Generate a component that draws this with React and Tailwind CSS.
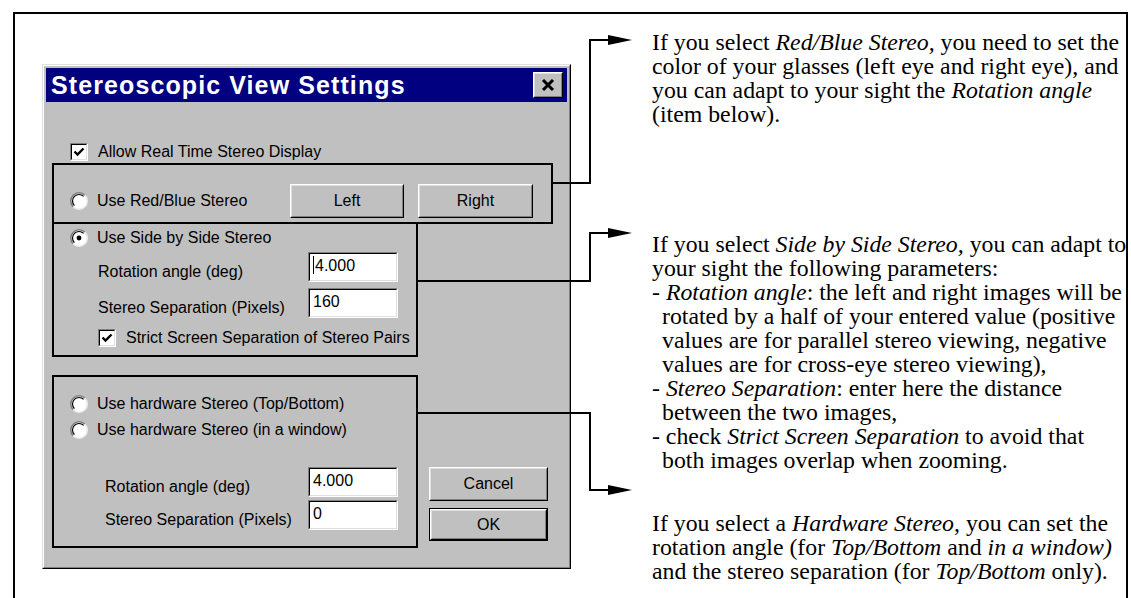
import React from 'react';

const sans = "font-['Liberation_Sans',Arial,sans-serif]";

const Raised = ({ className = '', children }) => (
    <div className={`border border-t-white border-l-white border-r-black border-b-black ${className}`}>
        <div className="w-full h-full border border-t-[#dfdfdf] border-l-[#dfdfdf] border-r-[#808080] border-b-[#808080] bg-[#c0c0c0] flex items-center justify-center">
            {children}
        </div>
    </div>
);

const Field = ({ value, caret }) => (
    <div className="w-[90px] h-[30px] border border-t-[#808080] border-l-[#808080] border-r-white border-b-white">
        <div className="w-full h-full border border-t-black border-l-black border-r-[#dfdfdf] border-b-[#dfdfdf] bg-white flex items-start pl-[3px] pt-[2px] text-[16px] leading-[20px]">
            {caret && <span className="w-px h-[18px] bg-black mr-px"></span>}
            <span>{value}</span>
        </div>
    </div>
);

const Radio = ({ checked }) => (
    <svg width="18" height="18" viewBox="0 0 18 18" className="shrink-0">
        <circle cx="9" cy="9" r="8.2" fill="#fff" />
        <path d="M14.8 3.2 A8.2 8.2 0 0 0 3.2 14.8" stroke="#808080" strokeWidth="1.6" fill="none" />
        <path d="M13.6 4.4 A6.5 6.5 0 0 0 4.4 13.6" stroke="#000" strokeWidth="1.2" fill="none" />
        <path d="M3.2 14.8 A8.2 8.2 0 0 0 14.8 3.2" stroke="#ececec" strokeWidth="1.6" fill="none" />
        {checked && <circle cx="9" cy="9" r="2.4" fill="#000" />}
    </svg>
);

const Check = () => (
    <div className="w-[18px] h-[18px] shrink-0 border border-t-[#808080] border-l-[#808080] border-r-white border-b-white">
        <div className="w-full h-full border border-t-black border-l-black border-r-[#dfdfdf] border-b-[#dfdfdf] bg-white">
            <svg width="14" height="14" viewBox="0 0 14 14">
                <path d="M2.5 6.5 L5.5 9.5 L11.5 3.5" stroke="#000" strokeWidth="2.4" fill="none" />
            </svg>
        </div>
    </div>
);

const FieldRow = ({ label, value, caret, labelW, pl, className = '' }) => (
    <div className={`flex items-center h-[30px] ${pl} ${className}`}>
        <span className={`${labelW} mt-[10px] whitespace-nowrap`}>{label}</span>
        <Field value={value} caret={caret} />
    </div>
);

const Dialog = () => (
    <div className={`w-[529px] h-[505px] shrink-0 border border-t-[#dfdfdf] border-l-[#dfdfdf] border-r-black border-b-black ${sans} text-[16px] text-black`}>
        <div className="h-full border border-t-white border-l-white border-r-[#808080] border-b-[#808080] bg-[#c0c0c0] p-[2px] flex flex-col">
            <div className="h-[34px] bg-[#000080] flex items-center justify-between pl-[5px] pr-[4px]">
                <span className="text-white font-bold text-[25px] leading-none tracking-[1.1px]">Stereoscopic View Settings</span>
                <Raised className="w-[30px] h-[26px]">
                    <svg width="14" height="12" viewBox="0 0 14 12">
                        <path d="M2 1 L12 11 M12 1 L2 11" stroke="#000" strokeWidth="3" />
                    </svg>
                </Raised>
            </div>

            <div className="px-[6px] flex flex-col">
                <div className="mt-[41px] h-[18px] flex items-center pl-[18px]">
                    <Check />
                    <span className="ml-[10px] whitespace-nowrap">Allow Real Time Stereo Display</span>
                </div>

                <div className="mt-[2px] w-[501px] h-[61px] border-2 border-black flex items-center pl-[16px] pt-[19px] pb-[4px]">
                    <Radio />
                    <span className="ml-[9px] whitespace-nowrap">Use Red/Blue Stereo</span>
                    <div className="ml-auto mr-[18px] flex gap-[14px]">
                        <Raised className="w-[114px] h-[34px]">Left</Raised>
                        <Raised className="w-[115px] h-[34px]">Right</Raised>
                    </div>
                </div>

                <div className="w-[366px] h-[133px] border-2 border-t-0 border-black flex flex-col pl-[16px]">
                    <div className="mt-[5px] h-[18px] flex items-center">
                        <Radio checked />
                        <span className="ml-[9px] whitespace-nowrap">Use Side by Side Stereo</span>
                    </div>
                    <FieldRow className="mt-[5px]" pl="pl-[28px]" labelW="w-[210px]" label="Rotation angle (deg)" value="4.000" caret />
                    <FieldRow className="mt-[6px]" pl="pl-[28px]" labelW="w-[210px]" label="Stereo Separation (Pixels)" value="160" />
                    <div className="mt-[11px] h-[18px] flex items-center pl-[28px]">
                        <Check />
                        <span className="ml-[10px] whitespace-nowrap">Strict Screen Separation of Stereo Pairs</span>
                    </div>
                </div>

                <div className="mt-[18px] flex">
                    <div className="w-[366px] h-[173px] border-2 border-black flex flex-col pl-[16px]">
                        <div className="mt-[18px] h-[18px] flex items-center">
                            <Radio />
                            <span className="ml-[9px] whitespace-nowrap">Use hardware Stereo (Top/Bottom)</span>
                        </div>
                        <div className="mt-[8px] h-[18px] flex items-center">
                            <Radio />
                            <span className="ml-[9px] whitespace-nowrap">Use hardware Stereo (in a window)</span>
                        </div>
                        <FieldRow className="mt-[28px]" pl="pl-[35px]" labelW="w-[203px]" label="Rotation angle (deg)" value="4.000" />
                        <FieldRow className="mt-[3px]" pl="pl-[35px]" labelW="w-[203px]" label="Stereo Separation (Pixels)" value="0" />
                    </div>
                    <div className="ml-[11px] mt-[92px] flex flex-col">
                        <Raised className="w-[119px] h-[34px]">Cancel</Raised>
                        <div className="mt-[7px] w-[119px] h-[33px] border border-black">
                            <Raised className="w-full h-full">OK</Raised>
                        </div>
                    </div>
                </div>
            </div>
        </div>
    </div>
);

const Line = ({ children, indent }) => (
    <div className={`whitespace-nowrap ${indent ? 'pl-[10px]' : ''}`}>{children}</div>
);

const Notes = () => (
    <div className="ml-[81px] pt-[16px] font-['Liberation_Serif','Times_New_Roman',serif] text-[23.8px] leading-[24px] text-black">
        <div>
            <Line>If you select <i>Red/Blue Stereo,</i> you need to set the</Line>
            <Line>color of your glasses (left eye and right eye), and</Line>
            <Line>you can adapt to your sight the <i>Rotation angle</i></Line>
            <Line>(item below).</Line>
        </div>
        <div className="mt-[106px]">
            <Line>If you select <i>Side by Side Stereo,</i> you can adapt to</Line>
            <Line>your sight the following parameters:</Line>
            <Line>- <i>Rotation angle</i>: the left and right images will be</Line>
            <Line indent>rotated by a half of your entered value (positive</Line>
            <Line indent>values are for parallel stereo viewing, negative</Line>
            <Line indent>values are for cross-eye stereo viewing),</Line>
            <Line>- <i>Stereo Separation</i>: enter here the distance</Line>
            <Line indent>between the two images,</Line>
            <Line>- check <i>Strict Screen Separation</i> to avoid that</Line>
            <Line indent>both images overlap when zooming.</Line>
        </div>
        <div className="mt-[39px]">
            <Line>If you select a <i>Hardware Stereo</i>, you can set the</Line>
            <Line>rotation angle (for <i>Top/Bottom</i> and <i>in a window)</i></Line>
            <Line>and the stereo separation (for <i>Top/Bottom</i> only).</Line>
        </div>
    </div>
);

const Connectors = () => (
    <svg className="absolute left-0 top-0 pointer-events-none" width="1131" height="598" viewBox="0 0 1131 598">
        <g stroke="#000" strokeWidth="2" fill="none">
            <path d="M553 183 H590 V40 H612" />
            <path d="M418 281 H590 V233 H612" />
            <path d="M418 413 H590 V490 H612" />
        </g>
        <g fill="#000">
            <polygon points="608,35 632,40 608,45" />
            <polygon points="608,228 632,233 608,238" />
            <polygon points="608,485 632,490 608,495" />
        </g>
    </svg>
);

export default function App() {
    return (
        <div className="relative w-[1131px] h-[598px] overflow-hidden bg-white pt-[12px] pl-[13px]">
            <div className="w-[1115px] h-[620px] border-2 border-black flex">
                <div className="ml-[27px] mt-[50px]">
                    <Dialog />
                </div>
                <Notes />
            </div>
            <Connectors />
        </div>
    );
}
